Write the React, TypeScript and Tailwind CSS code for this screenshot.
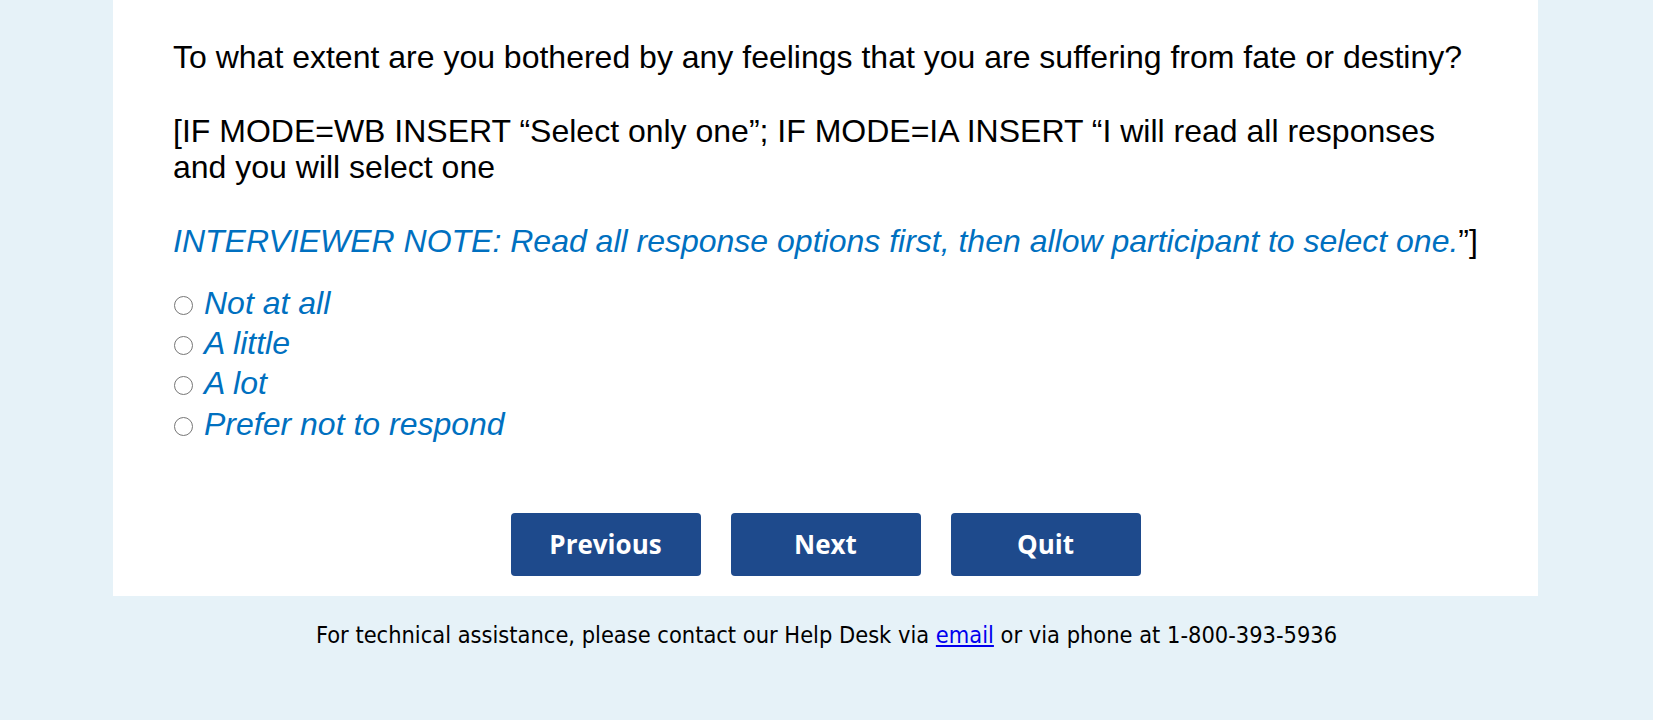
export default function App() {
  const options = ["Not at all", "A little", "A lot", "Prefer not to respond"];

  return (
    <div className="min-h-screen bg-[#e6f2f8]">
      <div className="ml-[113px] w-[1425px] bg-white pt-[39px] pb-[20px]">
        <div className="pl-[60px] pr-[30px] font-['Liberation_Sans',Arial,sans-serif] text-[32px] text-black">
          <p className="leading-[36.8px]">
            To what extent are you bothered by any feelings that you are suffering from fate or destiny?
            <br />
            <br />
            [IF MODE=WB INSERT “Select only one”; IF MODE=IA INSERT “I will read all responses
            <br />
            and you will select one
            <br />
            <br />
            <span className="italic text-[#0070c0]">
              INTERVIEWER NOTE: Read all response options first, then allow participant to select one.
            </span>
            ”]
          </p>

          <div className="mt-[23px]">
            {options.map((label) => (
              <div key={label} className="h-[40.3px] leading-[40.3px] whitespace-nowrap">
                <span className="ml-px mr-[11px] inline-block h-[19px] w-[19px] rounded-full border-[1.5px] border-[#767676] bg-white align-middle" />
                <span className="italic text-[#0070c0]">{label}</span>
              </div>
            ))}
          </div>
        </div>

        <div className="mt-[69px] flex justify-center gap-[30px]">
          {["Previous", "Next", "Quit"].map((label) => (
            <button
              key={label}
              type="button"
              className="h-[63px] w-[190px] rounded-[4px] bg-[#1e4a8c] font-['Open_Sans',sans-serif] text-[26px] font-bold text-white"
            >
              {label}
            </button>
          ))}
        </div>
      </div>

      <p className="mt-[22px] text-center font-['DejaVu_Sans_Condensed','DejaVu_Sans',sans-serif] text-[23.4px] text-black">
        For technical assistance, please contact our Help Desk via{" "}
        <a href="#" className="text-[#0000ee] underline">
          email
        </a>{" "}
        or via phone at 1-800-393-5936
      </p>
    </div>
  );
}
